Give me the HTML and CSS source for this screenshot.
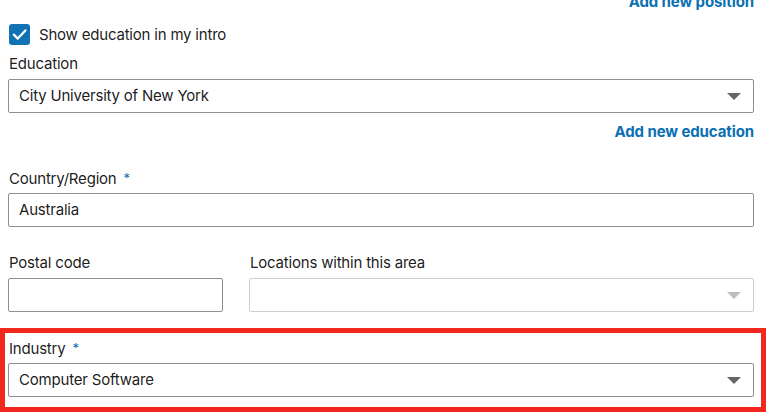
FILE: index.html
```html
<!DOCTYPE html>
<html lang="en">
<head>
<meta charset="utf-8">
<link rel="stylesheet" href="styles.css">
</head>
<body>
<div class="form">
  <div class="link-row top-link"><a class="link">Add new position</a></div>

  <label class="check-row">
    <span class="checkbox">
      <svg viewBox="0 0 21 21" width="21" height="21"><path d="M4.8 10.6 L8.8 14.6 L16.4 6.4" fill="none" stroke="#fff" stroke-width="2.2" stroke-linecap="round" stroke-linejoin="round"/></svg>
    </span>
    <span class="check-text">Show education in my intro</span>
  </label>

  <div class="field first">
    <div class="label">Education</div>
    <div class="control select"><span class="value">City University of New York</span><span class="arrow"></span></div>
  </div>
  <div class="link-row edu-link"><a class="link">Add new education</a></div>

  <div class="field group">
    <div class="label">Country/Region <span class="req">*</span></div>
    <div class="control"><span class="value">Australia</span></div>
  </div>

  <div class="row group">
    <div class="field postal">
      <div class="label">Postal code</div>
      <div class="control"></div>
    </div>
    <div class="field locations">
      <div class="label">Locations within this area</div>
      <div class="control select disabled"><span class="value"></span><span class="arrow"></span></div>
    </div>
  </div>

  <div class="field group industry">
    <div class="highlight"></div>
    <div class="label">Industry <span class="req">*</span></div>
    <div class="control select"><span class="value">Computer Software</span><span class="arrow"></span></div>
  </div>
</div>
</body>
</html>
```

FILE: styles.css
```css
* { box-sizing: border-box; }
html, body { margin: 0; padding: 0; background: #fff; }
body {
  font-family: Inter, "Noto Sans", sans-serif;
  font-size: 15px;
  letter-spacing: -0.2px;
  color: rgba(0,0,0,0.9);
  overflow: hidden;
  height: 418px;
}
.form {
  width: 746px;
  margin-left: 8px;
  position: relative;
}
.link-row { text-align: right; line-height: 20px; height: 20px; }
.link {
  color: #0a70b3;
  font-weight: 700;
  font-size: 15px;
  letter-spacing: -0.1px;
}
.top-link { margin-top: -8px; }
.check-row {
  display: flex;
  align-items: center;
  gap: 9px;
  margin-top: 12px;
  height: 21px;
}
.checkbox {
  width: 21px;
  height: 21px;
  border-radius: 3px;
  background: #1273b4;
  display: block;
  margin-left: 1px;
}
.checkbox svg { display: block; }
.check-text { line-height: 20px; }
.field { display: flex; flex-direction: column; }
.first { margin-top: 9px; }
.label { line-height: 20px; height: 20px; margin-bottom: 5px; padding-left: 1px; }
.req { color: #0a70b3; font-size: 13px; margin-left: 3px; vertical-align: 1px; }
.control {
  height: 34px;
  border: 1px solid #8f8f8f;
  border-radius: 2px;
  display: flex;
  align-items: center;
  padding: 0 12px 0 10px;
  background: #fff;
}
.value { flex: 1; line-height: 20px; }
.arrow {
  width: 0; height: 0;
  border-left: 7px solid transparent;
  border-right: 7px solid transparent;
  border-top: 7px solid #666;
}
.disabled { border-color: #cfcfcf; }
.disabled .arrow { border-top-color: #bdbdbd; }
.edu-link { margin-top: 9px; }
.group { margin-top: 26px; }
.row { display: flex; gap: 26px; }
.postal { width: 215px; }
.locations { flex: 1; }
.industry { position: relative; }
.highlight {
  position: absolute;
  left: -8px;
  top: -10px;
  width: 766px;
  height: 84px;
  border: 5px solid #f2281e;
  pointer-events: none;
}
```
